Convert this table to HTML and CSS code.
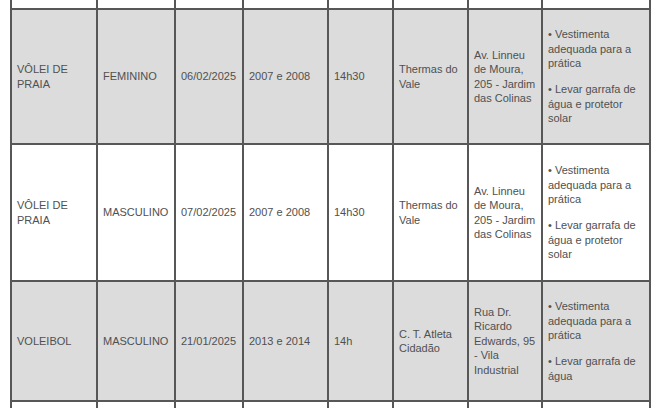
FILE: index.html
```html
<!DOCTYPE html>
<html lang="pt-BR">
<head>
<meta charset="utf-8">
<title>Agenda</title>
<link rel="stylesheet" href="styles.css">
</head>
<body>
<table class="sched">
  <colgroup>
    <col class="c1"><col class="c2"><col class="c3"><col class="c4"><col class="c5"><col class="c6"><col class="c7"><col class="c8">
  </colgroup>
  <tbody>
    <tr class="row-cut-top"><td></td><td></td><td></td><td></td><td></td><td></td><td></td><td></td></tr>
    <tr class="row-alt row-a">
      <td>VÔLEI DE PRAIA</td>
      <td>FEMININO</td>
      <td>06/02/2025</td>
      <td>2007 e 2008</td>
      <td>14h30</td>
      <td>Thermas do Vale</td>
      <td>Av. Linneu de Moura, 205 - Jardim das Colinas</td>
      <td><p>• Vestimenta adequada para a prática</p><p>• Levar garrafa de água e protetor solar</p></td>
    </tr>
    <tr class="row-b">
      <td>VÔLEI DE PRAIA</td>
      <td>MASCULINO</td>
      <td>07/02/2025</td>
      <td>2007 e 2008</td>
      <td>14h30</td>
      <td>Thermas do Vale</td>
      <td>Av. Linneu de Moura, 205 - Jardim das Colinas</td>
      <td><p>• Vestimenta adequada para a prática</p><p>• Levar garrafa de água e protetor solar</p></td>
    </tr>
    <tr class="row-alt row-c">
      <td>VOLEIBOL</td>
      <td>MASCULINO</td>
      <td>21/01/2025</td>
      <td>2013 e 2014</td>
      <td>14h</td>
      <td>C. T. Atleta Cidadão</td>
      <td>Rua Dr. Ricardo Edwards, 95 - Vila Industrial</td>
      <td><p>• Vestimenta adequada para a prática</p><p>• Levar garrafa de água</p></td>
    </tr>
    <tr class="row-cut-bottom"><td></td><td></td><td></td><td></td><td></td><td></td><td></td><td></td></tr>
  </tbody>
</table>
</body>
</html>
```

FILE: styles.css
```css
html, body {
  margin: 0;
  padding: 0;
  background: #fff;
  overflow: hidden;
  height: 408px;
}

.sched {
  margin-left: 10px;
  width: 641px;
  table-layout: fixed;
  border-collapse: separate;
  border-spacing: 0;
  font-family: "Liberation Sans", Arial, sans-serif;
  font-size: 11px;
  line-height: 14.5px;
  color: #505050;
}

.c1 { width: 88px; }
.c2 { width: 78px; }
.c3 { width: 68px; }
.c4 { width: 85px; }
.c5 { width: 65px; }
.c6 { width: 75px; }
.c7 { width: 74px; }
.c8 { width: 108px; }

.sched td {
  box-sizing: border-box;
  border-right: 2px solid #575757;
  border-bottom: 2px solid #575757;
  padding: 0 5px;
  vertical-align: middle;
  text-align: left;
}

.sched td:first-child {
  border-left: 2px solid #575757;
}

.row-alt td {
  background: #dcdcdc;
}

.row-cut-top { height: 10px; }
.row-a { height: 135px; }
.row-b { height: 137px; }
.row-c { height: 120px; }
.row-cut-bottom { height: 30px; }

.row-cut-bottom td {
  border-bottom: none;
}

.sched p {
  margin: 0 0 11.5px;
}

.sched p:last-child {
  margin-bottom: 0;
}
```
